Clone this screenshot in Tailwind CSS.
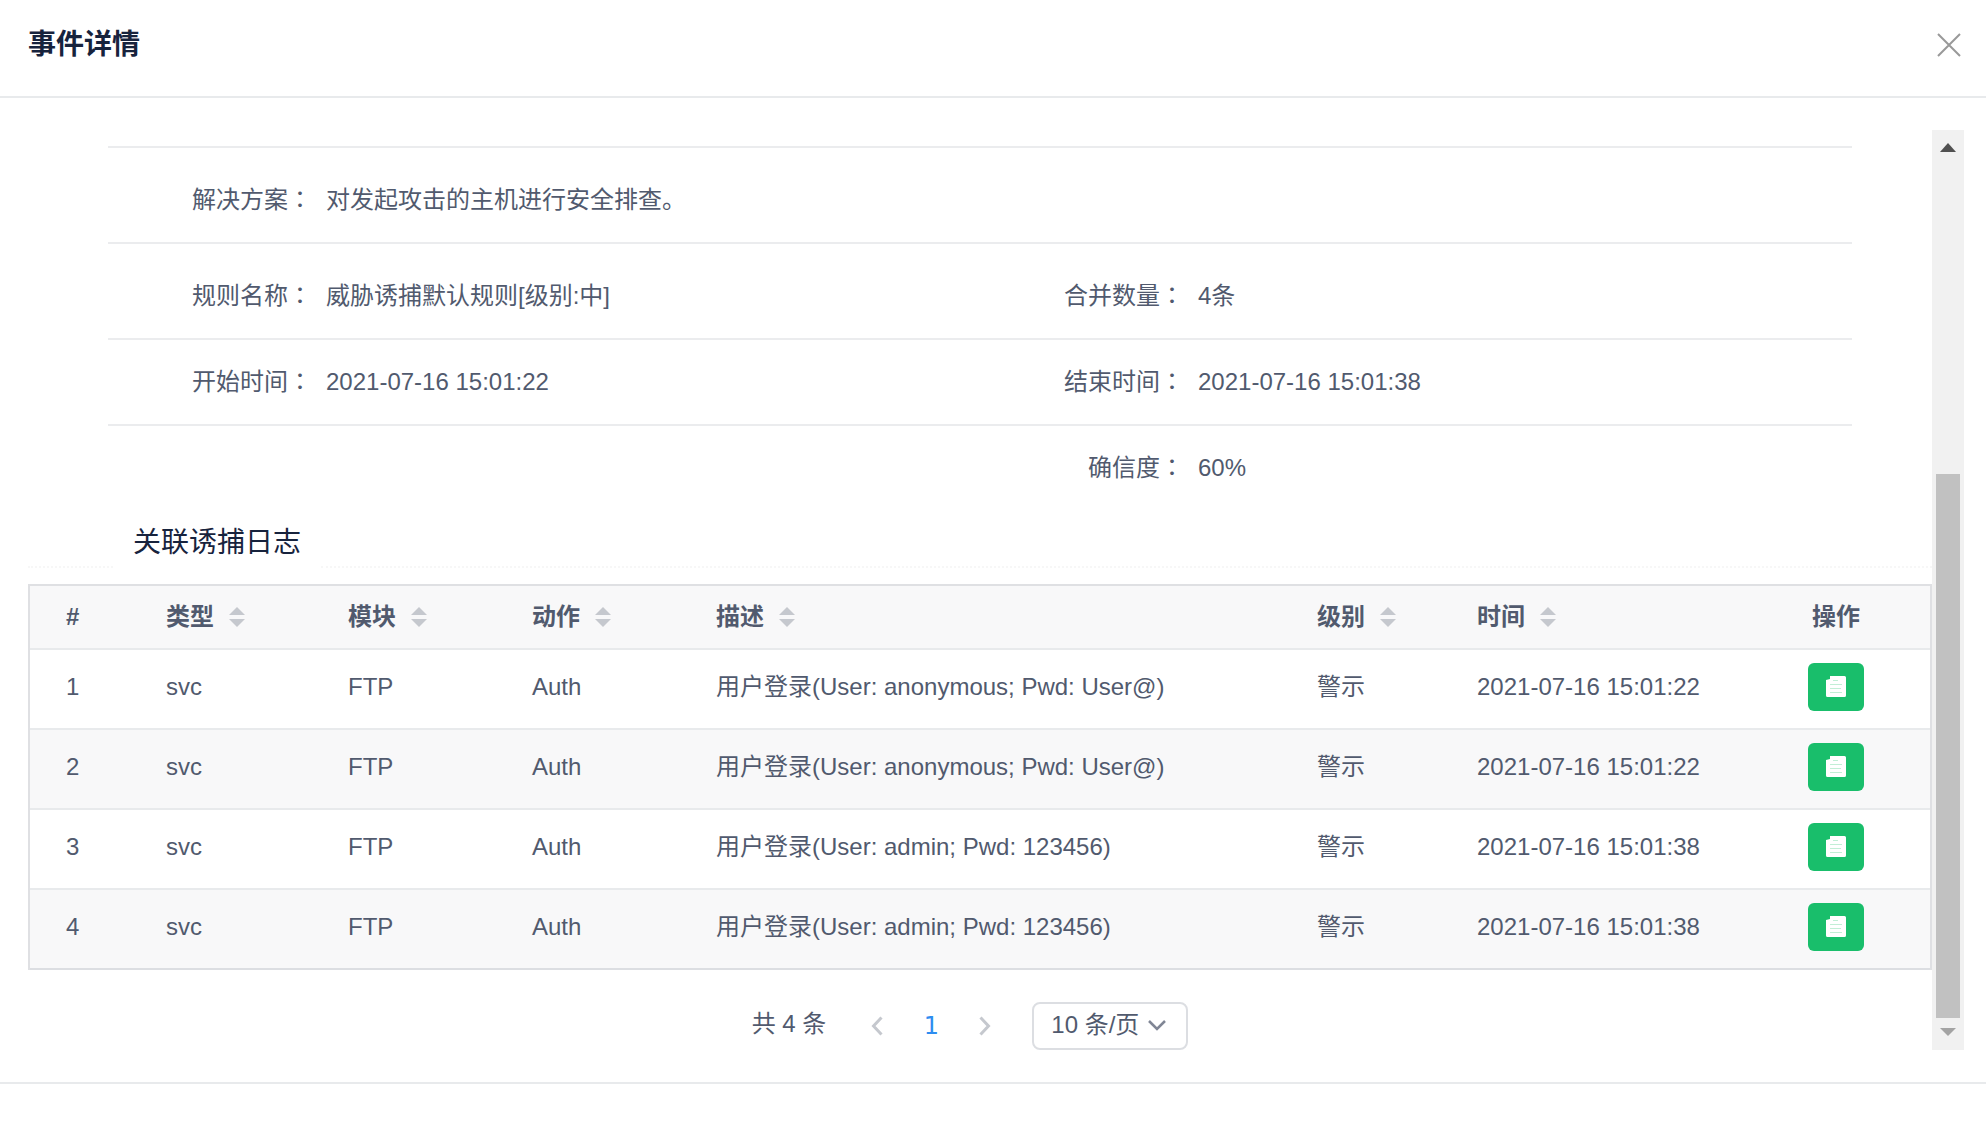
<!DOCTYPE html>
<html lang="zh-CN">
<head>
    <meta charset="UTF-8">
    <meta name="viewport" content="width=device-width, initial-scale=1.0">
    <title>事件详情</title>
    <script src="https://cdn.jsdelivr.net/npm/@tailwindcss/browser@4"></script>
    <style>
        body {
            font-family: "Liberation Sans", "Noto Sans CJK SC", sans-serif;
        }
        /* 全角冒号居中显示 */
        .colon {
            font-family: "Noto Sans CJK TC", sans-serif;
            line-height: 1;
        }
    </style>
</head>
<body class="bg-white text-2xl/9 text-[#515a6e]">

    <svg class="hidden">
        <symbol id="icon-sort" viewBox="0 0 16 20">
            <path d="M8 0l8 8H0zM0 12h16l-8 8z" fill="#c5c8ce"/>
        </symbol>
        <symbol id="icon-doc" viewBox="0 0 20 22">
            <path d="M4 0h14.500a1.500 1.500 0 0 1 1.500 1.500v18a1.500 1.500 0 0 1-1.500 1.500H1.500A1.500 1.500 0 0 1 0 19.500V4l4-1z" fill="#fff"/>
            <path d="M7 4.500h5M4 8.500h12M4 12.500h11M4 16.500h12" stroke="#c2eed6" stroke-width="1"/>
        </symbol>
    </svg>

    <div role="dialog" aria-labelledby="dialog-title" class="border-b-2 border-[#e8eaec]">
        <!-- 标题栏 -->
        <header class="flex h-[98px] items-center justify-between border-b-2 border-[#e8eaec] pb-1.5 pl-7 pr-[25px]">
            <h1 id="dialog-title" class="text-[28px] font-bold text-[#17233d]">事件详情</h1>
            <button type="button" aria-label="关闭" class="cursor-pointer">
                <svg class="size-6" viewBox="0 0 24 24" fill="none" stroke="#999" stroke-width="2"><path d="M1 1l22 22M23 1L1 23"/></svg>
            </button>
        </header>

        <main class="flex py-8 pl-7 pr-[22px]">
            <div class="min-w-0 flex-1 pt-4">
                <!-- 事件信息 -->
                <dl class="mx-20">
                    <div class="flex border-y-2 border-[#ebecee] pb-6 pt-[34px]">
                        <dt class="w-[204px] text-right">解决方案<span class="colon" lang="zh-TW">：</span></dt>
                        <dd class="flex-1 pl-3.5">对发起攻击的主机进行安全排查。</dd>
                    </div>
                    <div class="grid grid-cols-2 border-b-2 border-[#ebecee] pb-6 pt-[34px]">
                        <div class="flex">
                            <dt class="w-[204px] text-right">规则名称<span class="colon" lang="zh-TW">：</span></dt>
                            <dd class="flex-1 pl-3.5">威胁诱捕默认规则[级别:中]</dd>
                        </div>
                        <div class="flex">
                            <dt class="w-[204px] text-right">合并数量<span class="colon" lang="zh-TW">：</span></dt>
                            <dd class="flex-1 pl-3.5">4条</dd>
                        </div>
                    </div>
                    <div class="grid grid-cols-2 border-b-2 border-[#ebecee] py-6">
                        <div class="flex">
                            <dt class="w-[204px] text-right">开始时间<span class="colon" lang="zh-TW">：</span></dt>
                            <dd class="flex-1 pl-3.5">2021-07-16 15:01:22</dd>
                        </div>
                        <div class="flex">
                            <dt class="w-[204px] text-right">结束时间<span class="colon" lang="zh-TW">：</span></dt>
                            <dd class="flex-1 pl-3.5">2021-07-16 15:01:38</dd>
                        </div>
                    </div>
                    <div class="grid grid-cols-2 py-6">
                        <div class="col-start-2 flex">
                            <dt class="w-[204px] text-right">确信度<span class="colon" lang="zh-TW">：</span></dt>
                            <dd class="flex-1 pl-3.5">60%</dd>
                        </div>
                    </div>
                </dl>

                <!-- 关联日志 -->
                <div class="mt-2 flex items-end">
                    <span class="w-[85px] border-b-2 border-dotted border-[#f7f7f7]"></span>
                    <h2 class="px-5 text-[28px]/[50px] text-[#17233d]">关联诱捕日志</h2>
                    <span class="flex-1 border-b-2 border-dotted border-[#f7f7f7]"></span>
                </div>

                <div class="mt-4 border-2 border-b-0 border-[#dfe0e3]">
                    <table class="w-full table-fixed border-separate border-spacing-0 text-left">
                        <thead>
                            <tr class="bg-[#f8f8f9] *:h-16 *:border-b-2 *:border-[#e8eaec] *:pl-9">
                                <th class="w-[100px]">#</th>
                                <th class="w-[182px]"><button type="button" class="flex items-center gap-[15px]">类型<svg class="h-5 w-4"><use href="#icon-sort"/></svg></button></th>
                                <th class="w-[184px]"><button type="button" class="flex items-center gap-[15px]">模块<svg class="h-5 w-4"><use href="#icon-sort"/></svg></button></th>
                                <th class="w-[184px]"><button type="button" class="flex items-center gap-[15px]">动作<svg class="h-5 w-4"><use href="#icon-sort"/></svg></button></th>
                                <th><button type="button" class="flex items-center gap-[15px]">描述<svg class="h-5 w-4"><use href="#icon-sort"/></svg></button></th>
                                <th class="w-40"><button type="button" class="flex items-center gap-[15px]">级别<svg class="h-5 w-4"><use href="#icon-sort"/></svg></button></th>
                                <th class="w-[301px]"><button type="button" class="flex items-center gap-[15px]">时间<svg class="h-5 w-4"><use href="#icon-sort"/></svg></button></th>
                                <th class="w-[188px] pr-9 text-center">操作</th>
                            </tr>
                        </thead>
                        <tbody id="log-rows"></tbody>
                    </table>
                </div>

                <!-- 分页 -->
                <nav aria-label="分页" class="mt-8 flex h-12 items-center justify-center pr-5">
                    <span class="mr-6 pb-1">共 4 条</span>
                    <button type="button" aria-label="上一页" class="flex w-[54px] justify-center" disabled>
                        <svg class="h-5 w-3" viewBox="0 0 12 20" fill="none" stroke="#c5c8ce" stroke-width="3"><path d="M10.500 1.500L2.500 10l8 8.500"/></svg>
                    </button>
                    <a href="#" aria-current="page" class="w-[54px] text-center font-['DejaVu_Sans'] text-[#2d8cf0]">1</a>
                    <button type="button" aria-label="下一页" class="flex w-[54px] justify-center" disabled>
                        <svg class="h-5 w-3" viewBox="0 0 12 20" fill="none" stroke="#c5c8ce" stroke-width="3"><path d="M1.500 1.500l8 8.500-8 8.500"/></svg>
                    </button>
                    <div class="relative ml-5">
                        <select aria-label="每页条数" class="block h-12 w-[156px] appearance-none rounded-lg border-2 border-[#dcdee2] bg-white pb-0.5 pl-[17px]">
                            <option>10 条/页</option>
                            <option>20 条/页</option>
                        </select>
                        <svg class="pointer-events-none absolute right-[21px] top-[17px] h-3 w-5" viewBox="0 0 20 12" fill="none" stroke="#808695" stroke-width="2.500"><path d="M2 2l8 8 8-8"/></svg>
                    </div>
                </nav>
            </div>

            <!-- 滚动条 -->
            <div aria-hidden="true" class="flex w-8 flex-col bg-[#f1f1f1]">
                <svg class="size-8" viewBox="0 0 32 32"><path d="M8 22l8-9 8 9z" fill="#505050"/></svg>
                <div class="flex-1 px-1 pt-[312px]">
                    <div class="h-full bg-[#c1c1c1]"></div>
                </div>
                <svg class="size-8" viewBox="0 0 32 32"><path d="M8 10l8 8 8-8z" fill="#a3a3a3"/></svg>
            </div>
        </main>
    </div>

    <script>
        const logs = [
            { type: 'svc', module: 'FTP', action: 'Auth', desc: '用户登录(User: anonymous; Pwd: User@)', level: '警示', time: '2021-07-16 15:01:22' },
            { type: 'svc', module: 'FTP', action: 'Auth', desc: '用户登录(User: anonymous; Pwd: User@)', level: '警示', time: '2021-07-16 15:01:22' },
            { type: 'svc', module: 'FTP', action: 'Auth', desc: '用户登录(User: admin; Pwd: 123456)', level: '警示', time: '2021-07-16 15:01:38' },
            { type: 'svc', module: 'FTP', action: 'Auth', desc: '用户登录(User: admin; Pwd: 123456)', level: '警示', time: '2021-07-16 15:01:38' }
        ];

        document.getElementById('log-rows').innerHTML = logs.map((log, i) => `
            <tr class="even:bg-[#f8f8f9] *:h-20 *:border-b-2 *:border-[#e8eaec] *:pb-1 *:pl-9 last:*:border-[#dcdee2]">
                <td>${i + 1}</td>
                <td>${log.type}</td>
                <td>${log.module}</td>
                <td>${log.action}</td>
                <td>${log.desc}</td>
                <td>${log.level}</td>
                <td>${log.time}</td>
                <td class="pr-9">
                    <button type="button" aria-label="查看日志" class="mx-auto flex h-12 w-14 items-center justify-center rounded-md bg-[#19be6b]">
                        <svg class="h-[22px] w-5"><use href="#icon-doc"/></svg>
                    </button>
                </td>
            </tr>
        `).join('');
    </script>
</body>
</html>
